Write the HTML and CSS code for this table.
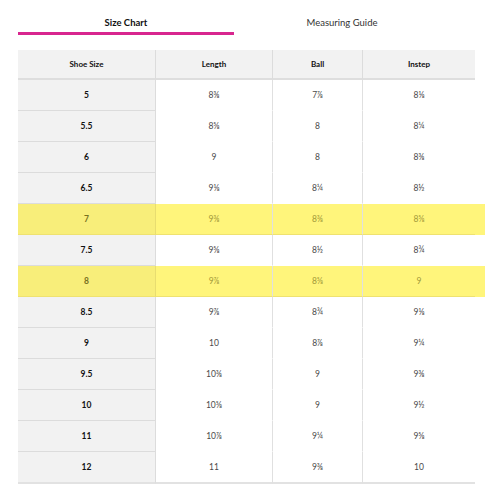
FILE: index.html
```html
<!DOCTYPE html>
<html>
<head>
<meta charset="utf-8">
<link rel="stylesheet" href="styles.css">
</head>
<body>
<div class="wrap">
  <div class="tabs">
    <div class="tab active">Size Chart</div>
    <div class="tab">Measuring Guide</div>
  </div>
  <table class="chart">
    <thead>
      <tr><th class="c1">Shoe Size</th><th class="c2">Length</th><th class="c3">Ball</th><th class="c4">Instep</th></tr>
    </thead>
    <tbody>
      <tr><td class="sz">5</td><td>8⅜</td><td>7⅞</td><td>8⅛</td></tr>
      <tr><td class="sz">5.5</td><td>8⅝</td><td>8</td><td>8¼</td></tr>
      <tr><td class="sz">6</td><td>9</td><td>8</td><td>8⅜</td></tr>
      <tr><td class="sz">6.5</td><td>9⅛</td><td>8¼</td><td>8½</td></tr>
      <tr class="hl"><td class="sz">7</td><td>9⅜</td><td>8⅜</td><td>8⅝</td></tr>
      <tr><td class="sz">7.5</td><td>9⅝</td><td>8½</td><td>8¾</td></tr>
      <tr class="hl"><td class="sz">8</td><td>9⅞</td><td>8⅝</td><td>9</td></tr>
      <tr><td class="sz">8.5</td><td>9⅞</td><td>8¾</td><td>9⅛</td></tr>
      <tr><td class="sz">9</td><td>10</td><td>8⅞</td><td>9¼</td></tr>
      <tr><td class="sz">9.5</td><td>10⅜</td><td>9</td><td>9⅜</td></tr>
      <tr><td class="sz">10</td><td>10⅝</td><td>9</td><td>9½</td></tr>
      <tr><td class="sz">11</td><td>10⅞</td><td>9¼</td><td>9⅝</td></tr>
      <tr class="last"><td class="sz">12</td><td>11</td><td>9⅜</td><td>10</td></tr>
    </tbody>
  </table>
</div>
</body>
</html>
```

FILE: styles.css
```css
html, body {
  margin: 0;
  padding: 0;
  background: #fff;
}
body {
  font-family: Lato, "Open Sans", sans-serif;
  color: #222;
}
.wrap {
  padding: 12px 18px 0 18px;
}
.tabs {
  display: flex;
  width: 432px;
}
.tab {
  flex: 1;
  text-align: center;
  font-size: 9.5px;
  color: #333;
  height: 20px;
  line-height: 22px;
  border-bottom: 3px solid transparent;
}
.tab.active {
  font-weight: 700;
  color: #111;
  border-bottom-color: #d8268f;
}
.chart {
  margin-top: 15px;
  border-collapse: separate;
  border-spacing: 0;
  width: 454px;
  table-layout: fixed;
}
.chart th {
  background: #f2f2f2;
  font-size: 8px;
  font-weight: 700;
  color: #111;
  height: 28px;
  padding: 0;
  border-bottom: 2px solid #dedede;
  border-right: 1px solid #dcdcdc;
}
.chart th.c4 { border-right: none; }
.c1 { width: 137px; }
.c2 { width: 116px; }
.c3 { width: 89px; }
.c4 { width: 112px; }
.chart td {
  height: 30px;
  padding: 0;
  text-align: center;
  font-size: 8.5px;
  color: #4a4a4a;
  border-right: 1px solid #e0e0e0;
  border-bottom: 1px solid transparent;
}
.chart td:last-child { border-right: none; }
.chart td.sz {
  background: #f2f2f2;
  font-weight: 700;
  color: #111;
  border-bottom: 1px solid #dcdcdc;
  border-right: 1px solid #dcdcdc;
}
.chart tr.last td { border-bottom: 2px solid #e2e2e2; }
.chart tr.hl td {
  background: #fff57b;
  color: #a39a3a;
  border-bottom-color: #efe270;
}
.chart tr.hl td.sz {
  background: #f8ee7a;
  color: #77711f;
  border-right-color: #e8dd70;
}
.chart tr.hl td:last-child {
  box-shadow: 10px 0 0 #fff57b;
}
```
